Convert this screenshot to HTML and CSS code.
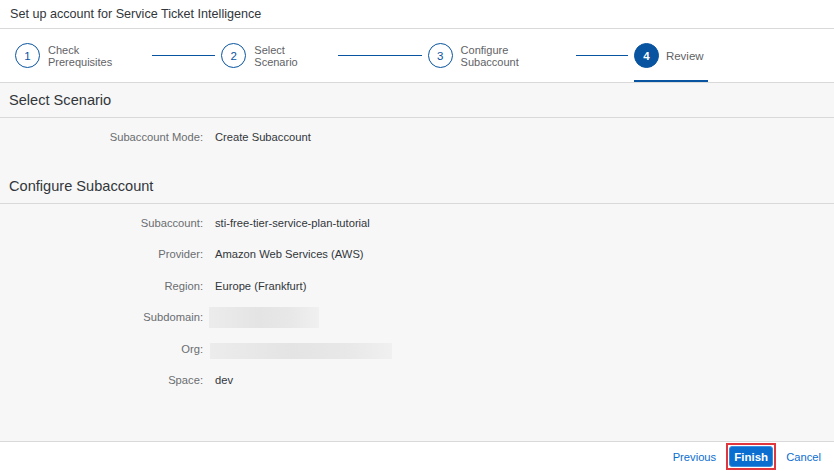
FILE: index.html
```html
<!DOCTYPE html>
<html lang="en">
<head>
<meta charset="utf-8">
<title>Set up account for Service Ticket Intelligence</title>
<link rel="stylesheet" href="styles.css">
</head>
<body>
<div class="dialog">
  <header class="dialog-title">Set up account for Service Ticket Intelligence</header>

  <nav class="stepper">
    <div class="step">
      <span class="step-circle">1</span>
      <span class="step-label">Check<br>Prerequisites</span>
      <span class="connector connector--1"></span>
    </div>
    <div class="step">
      <span class="step-circle">2</span>
      <span class="step-label">Select<br>Scenario</span>
      <span class="connector connector--2"></span>
    </div>
    <div class="step">
      <span class="step-circle">3</span>
      <span class="step-label">Configure<br>Subaccount</span>
      <span class="connector connector--3"></span>
    </div>
    <div class="step">
      <div class="step-tab">
        <span class="step-circle step-circle--active">4</span>
        <span class="step-label step-label--active">Review</span>
      </div>
    </div>
  </nav>

  <main class="content">
    <section class="group">
      <h2 class="group-title">Select Scenario</h2>
      <div class="form">
        <div class="row"><span class="label">Subaccount Mode:</span><span class="value">Create Subaccount</span></div>
      </div>
    </section>
    <section class="group">
      <h2 class="group-title">Configure Subaccount</h2>
      <div class="form">
        <div class="row"><span class="label">Subaccount:</span><span class="value">sti-free-tier-service-plan-tutorial</span></div>
        <div class="row"><span class="label">Provider:</span><span class="value">Amazon Web Services (AWS)</span></div>
        <div class="row"><span class="label">Region:</span><span class="value">Europe (Frankfurt)</span></div>
        <div class="row"><span class="label">Subdomain:</span><span class="redact redact--sub"></span></div>
        <div class="row"><span class="label">Org:</span><span class="redact redact--org"></span></div>
        <div class="row"><span class="label">Space:</span><span class="value">dev</span></div>
      </div>
    </section>
  </main>

  <footer class="footer">
    <button class="link-btn" type="button">Previous</button>
    <span class="highlight-frame"><button class="primary-btn" type="button">Finish</button></span>
    <button class="link-btn" type="button">Cancel</button>
  </footer>
</div>
</body>
</html>
```

FILE: styles.css
```css
* { box-sizing: border-box; }
html, body { margin: 0; padding: 0; }
body {
  font-family: "Liberation Sans", Arial, sans-serif;
  color: #32363a;
  background: #ffffff;
}
.dialog {
  width: 834px;
  height: 471px;
  display: flex;
  flex-direction: column;
  overflow: hidden;
}
.dialog-title {
  height: 29px;
  padding-left: 10px;
  display: flex;
  align-items: center;
  font-size: 12.6px;
  color: #32363a;
  border-bottom: 1px solid #d9d9d9;
  box-shadow: 0 1px 1px rgba(0,0,0,0.04);
}
.stepper {
  height: 54px;
  padding-left: 15px;
  display: grid;
  grid-template-columns: repeat(4, 206.3px);
  border-bottom: 1px solid #d9d9d9;
  background: #ffffff;
}
.step {
  display: flex;
  align-items: center;
}
.step-circle {
  width: 25px;
  height: 25px;
  flex: none;
  border: 1px solid #0854a0;
  border-radius: 50%;
  display: flex;
  align-items: center;
  justify-content: center;
  font-size: 11.5px;
  color: #0854a0;
  background: #ffffff;
}
.step-circle--active {
  background: #0854a0;
  color: #ffffff;
  font-weight: bold;
}
.step-label {
  margin-left: 8px;
  flex: 1;
  font-size: 11px;
  line-height: 12px;
  color: #5f6266;
}
.step-label--active {
  flex: none;
  margin-left: 7px;
  font-size: 11.5px;
}
.connector {
  height: 1px;
  background: #0854a0;
  margin-right: 6px;
  flex: none;
}
.connector--1 { width: 63px; }
.connector--2 { width: 84px; }
.connector--3 { width: 52px; }
.step-tab {
  align-self: stretch;
  width: 74px;
  display: flex;
  align-items: center;
  box-shadow: inset 0 -2px 0 #0854a0;
}
.content {
  flex: 1;
  background: #f7f7f7;
}
.group-title {
  margin: 0;
  height: 35px;
  padding-left: 9px;
  display: flex;
  align-items: center;
  font-size: 14.6px;
  font-weight: normal;
  color: #32363a;
  border-bottom: 1px solid #d9d9d9;
}
.form {
  padding: 3px 0 16.5px;
}
.row {
  height: 31.5px;
  display: flex;
  align-items: center;
}
.label {
  width: 203px;
  text-align: right;
  font-size: 11.2px;
  color: #6a6d70;
  flex: none;
}
.value {
  margin-left: 12px;
  font-size: 11.2px;
  color: #32363a;
}
.redact {
  display: block;
  background: linear-gradient(90deg, #ececec 0%, #e4e4e4 45%, #e8e8e8 75%, #f0f0f0 100%);
}
.redact--sub {
  margin-left: 6px;
  width: 110px;
  height: 21px;
  margin-top: 1px;
}
.redact--org {
  margin-left: 7px;
  width: 182px;
  height: 16px;
  margin-top: 5px;
}
.footer {
  height: 30px;
  border-top: 1px solid #d9d9d9;
  background: #ffffff;
  display: flex;
  align-items: center;
  justify-content: flex-end;
  gap: 10px;
  padding-right: 13px;
}
.link-btn {
  border: none;
  background: none;
  padding: 0;
  font-family: inherit;
  font-size: 11.2px;
  color: #0a6ed1;
}
.highlight-frame {
  display: flex;
  padding: 1px;
  border: 2px solid #e0363d;
}
.primary-btn {
  height: 21px;
  width: 44px;
  padding: 0;
  border: 1px solid #3d8fe0;
  border-radius: 3px;
  background: #0a6ed1;
  color: #ffffff;
  font-family: inherit;
  font-size: 11.5px;
  font-weight: bold;
}
```
